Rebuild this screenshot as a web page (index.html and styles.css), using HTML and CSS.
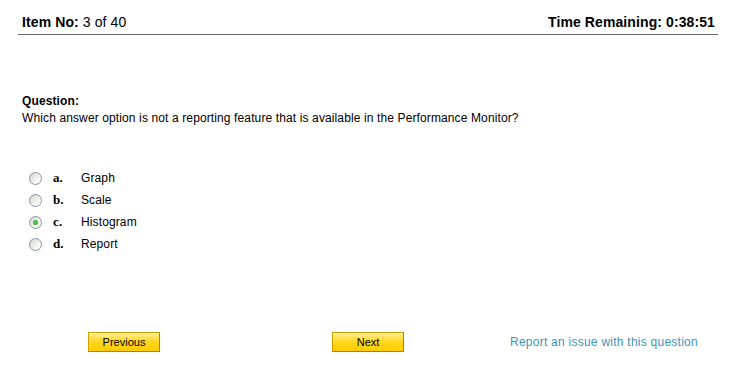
FILE: index.html
```html
<!DOCTYPE html>
<html lang="en">
<head>
    <meta charset="UTF-8">
    <title>Practice Test</title>
    <link rel="stylesheet" href="styles.css">
</head>
<body>
    <header class="top-bar">
        <div class="item-no"><b>Item No:</b> 3 of 40</div>
        <div class="time-left">Time Remaining: 0:38:51</div>
    </header>

    <div class="question">
        <div class="question-label">Question:</div>
        <p class="question-text">Which answer option is not a reporting feature that is available in the Performance Monitor?</p>
    </div>

    <ul class="options">
        <li class="option"><span class="radio"></span><span class="letter">a.</span><span class="answer">Graph</span></li>
        <li class="option"><span class="radio"></span><span class="letter">b.</span><span class="answer">Scale</span></li>
        <li class="option"><span class="radio checked"></span><span class="letter">c.</span><span class="answer">Histogram</span></li>
        <li class="option"><span class="radio"></span><span class="letter">d.</span><span class="answer">Report</span></li>
    </ul>

    <div class="nav">
        <button class="btn">Previous</button>
        <button class="btn btn-next">Next</button>
        <a class="report-link" href="#">Report an issue with this question</a>
    </div>
</body>
</html>
```

FILE: styles.css
```css
body {
    margin: 0;
    background: #fff;
    color: #000;
    font-family: "Liberation Sans", Arial, sans-serif;
}

.top-bar {
    width: 693px;
    margin-left: 18px;
    padding: 14px 3px 4px 4px;
    border-bottom: 1px solid #666;
    display: flex;
    justify-content: space-between;
    font-size: 14px;
    line-height: 16px;
    letter-spacing: 0.1px;
}

.time-left {
    font-weight: bold;
}

.question {
    padding-left: 22px;
    margin-top: 59px;
    font-size: 12px;
    line-height: 14px;
    letter-spacing: 0.12px;
}

.question-label {
    font-weight: bold;
}

.question-text {
    margin: 3px 0 0;
}

.options {
    list-style: none;
    margin: 42px 0 0;
    padding: 0 0 0 29px;
}

.option {
    display: flex;
    align-items: center;
    height: 22px;
    font-size: 12px;
    letter-spacing: 0.12px;
}

.radio {
    width: 11px;
    height: 11px;
    border: 1px solid #8595a6;
    border-radius: 50%;
    background: linear-gradient(135deg, #d4d4d0, #f4f4f2 60%, #fff);
    display: flex;
    align-items: center;
    justify-content: center;
    margin-right: 11px;
}

.radio.checked::after {
    content: "";
    width: 5px;
    height: 5px;
    border-radius: 50%;
    background: radial-gradient(circle, #5ad65a, #22a022);
}

.letter {
    width: 28px;
    font-family: "Liberation Serif", "Times New Roman", serif;
    font-weight: bold;
    font-size: 13px;
}

.nav {
    display: flex;
    align-items: center;
    margin-top: 77px;
    padding-left: 88px;
}

.btn {
    width: 72px;
    height: 20px;
    padding: 0;
    font-family: "Liberation Sans", Arial, sans-serif;
    font-size: 11px;
    color: #000;
    background: linear-gradient(#ffef9a, #ffd820 45%, #ffcc00);
    border: 1px solid #c9a200;
    border-bottom-color: #a88400;
    border-right-color: #a88400;
    cursor: pointer;
}

.btn-next {
    margin-left: 172px;
}

.report-link {
    margin-left: 106px;
    font-size: 12px;
    letter-spacing: 0.25px;
    color: #3c96b6;
    text-decoration: none;
}
```
